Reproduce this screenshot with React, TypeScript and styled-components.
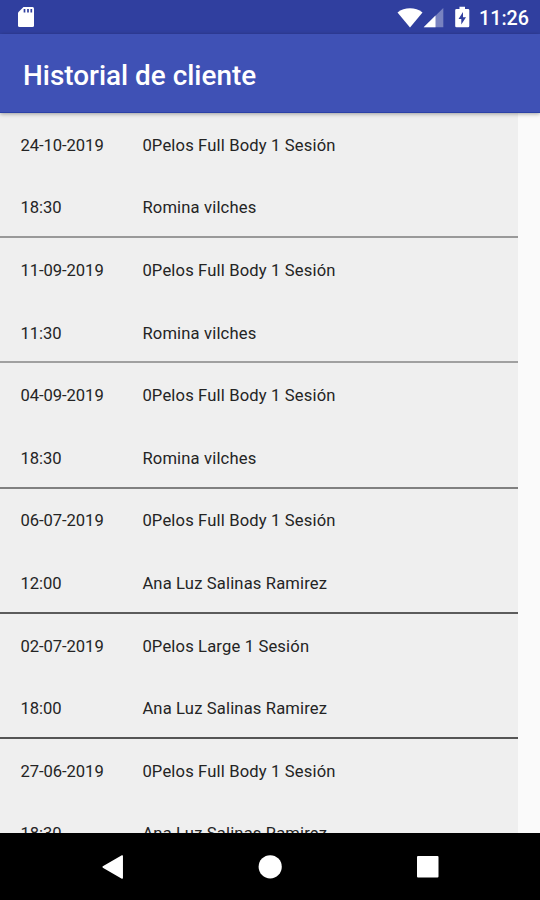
import React from "react";
import styled, { createGlobalStyle } from "styled-components";

const GlobalStyle = createGlobalStyle`
  * { box-sizing: border-box; }
  body { margin: 0; background: #fafafa; }
`;

const Screen = styled.div`
  width: 540px;
  height: 900px;
  display: flex;
  flex-direction: column;
  overflow: hidden;
  background: #fafafa;
  font-family: Roboto, "Liberation Sans", sans-serif;
`;

const StatusBar = styled.header`
  flex: none;
  height: 34px;
  padding: 0 11px 0 17px;
  display: flex;
  align-items: center;
  color: #fff;
  background: #303f9f;
`;

const StatusIcons = styled.div`
  margin-left: auto;
  display: flex;
  align-items: center;
`;

const Clock = styled.span`
  width: 50px;
  margin-left: 8px;
  padding-top: 3px;
  font-size: 19.7px;
  font-weight: 500;
  line-height: 24px;
  white-space: nowrap;
`;

const AppBar = styled.div`
  flex: none;
  height: 79px;
  padding: 5px 23px 0;
  display: flex;
  align-items: center;
  background: #3f51b5;
  border-bottom: 1px solid #2b41a6;
  box-shadow: 0 1px 4px rgba(0, 0, 0, 0.35);
  z-index: 1;
`;

const Title = styled.h1`
  margin: 0;
  color: #fff;
  font-size: 27.9px;
  font-weight: 500;
  line-height: 36px;
  white-space: nowrap;
`;

const History = styled.main`
  flex: 1;
  min-height: 0;
  width: 518px;
  overflow: hidden;
  background: #efefef;
`;

const Entry = styled.section<{ $line: string }>`
  height: 125.2px;
  padding: 1.6px 0 0 20.4px;
  display: grid;
  grid-template-columns: 122px 1fr;
  grid-template-rows: 62.6px 62.6px;
  align-items: center;
  box-shadow: inset 0 -2px ${(p) => p.$line};
`;

const Cell = styled.span<{ $wide?: boolean }>`
  color: #242424;
  font-size: 16.6px;
  line-height: 22px;
  letter-spacing: ${(p) => (p.$wide ? "0.15px" : "-0.05px")};
  white-space: nowrap;
`;

const NavBar = styled.nav`
  flex: none;
  height: 67px;
  padding: 0 34px;
  display: grid;
  grid-template-columns: repeat(3, 1fr);
  place-items: center;
  background: #000;
`;

const Icon = styled.svg`
  display: block;
  flex: none;
`;

const entries = [
  { date: "24-10-2019", time: "18:30", service: "0Pelos Full Body 1 Sesión", person: "Romina vilches", line: "#999" },
  { date: "11-09-2019", time: "11:30", service: "0Pelos Full Body 1 Sesión", person: "Romina vilches", line: "#a0a0a0" },
  { date: "04-09-2019", time: "18:30", service: "0Pelos Full Body 1 Sesión", person: "Romina vilches", line: "#808080" },
  { date: "06-07-2019", time: "12:00", service: "0Pelos Full Body 1 Sesión", person: "Ana Luz Salinas Ramirez", line: "#5c5c5c" },
  { date: "02-07-2019", time: "18:00", service: "0Pelos Large 1 Sesión", person: "Ana Luz Salinas Ramirez", line: "#555" },
  { date: "27-06-2019", time: "18:30", service: "0Pelos Full Body 1 Sesión", person: "Ana Luz Salinas Ramirez", line: "#555" },
];

export default function App() {
  return (
    <>
      <GlobalStyle />
      <Screen>
        <StatusBar>
          <Icon width="18" height="22" viewBox="0 0 18 22">
            <path d="M6.5 1H15.5Q17 1 17 2.5V19.5Q17 21 15.5 21H2.5Q1 21 1 19.5V6.5Z" fill="#fff" />
            <path d="M7.5 3v3.5M11 3v3.5M14.3 3v3.5" stroke="#303f9f" strokeWidth="1.7" />
          </Icon>
          <StatusIcons>
            <Icon width="26" height="21" viewBox="0 0 26 21">
              <path d="M0.5 5.4C7.5-.2 18.5-.2 25.5 5.4L13 20.5Z" fill="#fff" />
            </Icon>
            <Icon width="21" height="21" viewBox="0 0 21 21">
              <path d="M20.3 1V20.3H.7Z" fill="#fff" opacity=".35" />
              <path d="M12.5 8.5V20.3H.7Z" fill="#fff" />
            </Icon>
            <Icon width="27" height="22" viewBox="-11 0 27 22">
              <path d="M4.5.7H10V3H13Q14.3 3 14.3 4.300V20Q14.3 21.3 13 21.3H1.5Q.2 21.3.2 20V4.300Q.2 3 1.5 3H4.5Z" fill="#fff" />
              <path d="M8 6L3.5 13H6.3V18.5L11 11.2H8Z" fill="#303f9f" />
            </Icon>
            <Clock>11:26</Clock>
          </StatusIcons>
        </StatusBar>
        <AppBar>
          <Title>Historial de cliente</Title>
        </AppBar>
        <History>
          {entries.map((entry) => (
            <Entry key={entry.date} $line={entry.line}>
              <Cell>{entry.date}</Cell>
              <Cell $wide>{entry.service}</Cell>
              <Cell>{entry.time}</Cell>
              <Cell $wide>{entry.person}</Cell>
            </Entry>
          ))}
        </History>
        <NavBar>
          <Icon width="24" height="26" viewBox="0 0 24 26">
            <path d="M21.2 2V24L2.2 13Z" fill="#fff" stroke="#fff" strokeWidth="1.5" strokeLinejoin="round" />
          </Icon>
          <Icon width="24" height="24" viewBox="0 0 24 24">
            <circle cx="12.2" cy="11.8" r="11.6" fill="#fff" />
          </Icon>
          <Icon width="23" height="22" viewBox="0 0 23 22">
            <rect x="1" y="0" width="21.5" height="21.5" rx="1" fill="#fff" />
          </Icon>
        </NavBar>
      </Screen>
    </>
  );
}
